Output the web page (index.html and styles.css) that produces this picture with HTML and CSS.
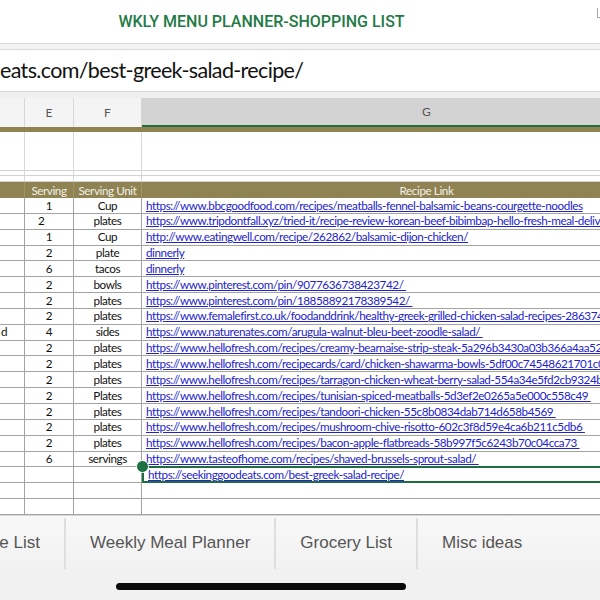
FILE: index.html
```html
<!DOCTYPE html>
<html>
<head>
<meta charset="utf-8">
<link rel="stylesheet" href="styles.css">
</head>
<body>
<header class="top">
  <span></span>
  <h1 class="title">WKLY MENU PLANNER-SHOPPING LIST</h1>
  <span class="corner"></span>
</header>
<div class="strip"></div>
<div class="formula">eats.com/best-greek-salad-recipe/</div>
<div class="gap"></div>
<div class="sheet">
  <div class="ch"></div><div class="ch">E</div><div class="ch">F</div><div class="ch sel">G</div>
  <div class="band"></div>
  <div class="e"></div><div class="e"></div><div class="e"></div><div class="e"></div>
  <div class="e"></div><div class="e"></div><div class="e"></div><div class="e"></div>
  <div class="e"></div><div class="e"></div><div class="e"></div><div class="e"></div>
  <div class="h"></div><div class="h">Serving</div><div class="h">Serving Unit</div><div class="h">Recipe Link</div>

  <div class="c"></div><div class="c n">1</div><div class="c u">Cup</div><div class="c l"><a>https://www.bbcgoodfood.com/recipes/meatballs-fennel-balsamic-beans-courgette-noodles</a></div>
  <div class="c"></div><div class="c n off">2</div><div class="c u">plates</div><div class="c l"><a>https://www.tripdontfall.xyz/tried-it/recipe-review-korean-beef-bibimbap-hello-fresh-meal-delivery-kit/</a></div>
  <div class="c"></div><div class="c n">1</div><div class="c u">Cup</div><div class="c l"><a>http://www.eatingwell.com/recipe/262862/balsamic-dijon-chicken/</a></div>
  <div class="c"></div><div class="c n">2</div><div class="c u">plate</div><div class="c l"><a>dinnerly</a></div>
  <div class="c"></div><div class="c n">6</div><div class="c u">tacos</div><div class="c l"><a>dinnerly</a></div>
  <div class="c"></div><div class="c n">2</div><div class="c u">bowls</div><div class="c l"><a>https://www.pinterest.com/pin/9077636738423742/&nbsp;</a></div>
  <div class="c"></div><div class="c n">2</div><div class="c u">plates</div><div class="c l"><a>https://www.pinterest.com/pin/18858892178389542/&nbsp;</a></div>
  <div class="c"></div><div class="c n">2</div><div class="c u">plates</div><div class="c l"><a>https://www.femalefirst.co.uk/foodanddrink/healthy-greek-grilled-chicken-salad-recipes-2863745.html</a></div>
  <div class="c lt">d</div><div class="c n">4</div><div class="c u">sides</div><div class="c l"><a>https://www.naturenates.com/arugula-walnut-bleu-beet-zoodle-salad/&nbsp;</a></div>
  <div class="c"></div><div class="c n">2</div><div class="c u">plates</div><div class="c l"><a>https://www.hellofresh.com/recipes/creamy-bearnaise-strip-steak-5a296b3430a03b366a4aa522</a></div>
  <div class="c"></div><div class="c n">2</div><div class="c u">plates</div><div class="c l"><a>https://www.hellofresh.com/recipecards/card/chicken-shawarma-bowls-5df00c74548621701c0b9a4c</a></div>
  <div class="c"></div><div class="c n">2</div><div class="c u">plates</div><div class="c l"><a>https://www.hellofresh.com/recipes/tarragon-chicken-wheat-berry-salad-554a34e5fd2cb9324b8b4567</a></div>
  <div class="c"></div><div class="c n">2</div><div class="c u">Plates</div><div class="c l"><a>https://www.hellofresh.com/recipes/tunisian-spiced-meatballs-5d3ef2e0265a5e000c558c49&nbsp;</a></div>
  <div class="c"></div><div class="c n">2</div><div class="c u">plates</div><div class="c l"><a>https://www.hellofresh.com/recipes/tandoori-chicken-55c8b0834dab714d658b4569&nbsp;</a></div>
  <div class="c"></div><div class="c n">2</div><div class="c u">plates</div><div class="c l"><a>https://www.hellofresh.com/recipes/mushroom-chive-risotto-602c3f8d59e4ca6b211c5db6&nbsp;</a></div>
  <div class="c"></div><div class="c n">2</div><div class="c u">plates</div><div class="c l"><a>https://www.hellofresh.com/recipes/bacon-apple-flatbreads-58b997f5c6243b70c04cca73&nbsp;</a></div>
  <div class="c"></div><div class="c n">6</div><div class="c u">servings</div><div class="c l above"><a>https://www.tasteofhome.com/recipes/shaved-brussels-sprout-salad/&nbsp;</a></div>
  <div class="c"></div><div class="c"></div><div class="c"></div><div class="c l picked"><span class="handle"></span><a>https://seekinggoodeats.com/best-greek-salad-recipe/</a></div>
  <div class="c"></div><div class="c"></div><div class="c"></div><div class="c"></div>
  <div class="c"></div><div class="c"></div><div class="c"></div><div class="c"></div>
</div>
<nav class="tabs">
  <div class="tab first"><span>Recipe List</span></div>
  <div class="tab">Weekly Meal Planner</div>
  <div class="tab">Grocery List</div>
  <div class="tab">Misc ideas</div>
</nav>
<div class="home"><div class="bar"></div></div>
</body>
</html>
```
FILE: styles.css
```css
* { box-sizing: border-box; }
html, body { margin: 0; padding: 0; }
body {
  width: 600px;
  height: 600px;
  overflow: hidden;
  background: #ffffff;
  font-family: "Lato", "Liberation Sans", sans-serif;
}
.top {
  height: 43px;
  display: grid;
  grid-template-columns: 1fr auto 1fr;
  align-items: center;
  padding-right: 77px;
}
.title {
  margin: 0;
  font-family: "Roboto", "Liberation Sans", sans-serif;
  font-weight: 500;
  font-size: 16px;
  color: #237a45;
}
.corner {
  justify-self: end;
  align-self: start;
  margin-top: 8px;
  margin-right: -77px;
  width: 3px;
  height: 10px;
  border-left: 1px solid #a8a8a8;
  border-bottom: 1px solid #a8a8a8;
}
.strip {
  height: 7px;
  background: #f3f3f3;
  border-top: 1px solid #dadada;
  border-bottom: 1px solid #dadada;
}
.formula {
  height: 42px;
  background: #fff;
  border-bottom: 1px solid #d8d8d8;
  font-family: "Lato", "Liberation Sans", sans-serif;
  font-size: 21.5px;
  letter-spacing: -0.65px;
  color: #111;
  line-height: 40px;
  white-space: nowrap;
  overflow: hidden;
}
.gap {
  height: 6px;
  background: #efefef;
}
.sheet {
  width: 600px;
  overflow: hidden;
  display: grid;
  grid-template-columns: 25px 49px 68px 570px;
  grid-template-rows: 29px 5px 39px 5px 6px 16px repeat(20, 15.85px);
  font-size: 11.7px;
  letter-spacing: -0.42px;
}
.ch {
  background: #f4f4f4;
  border-right: 1px solid #d6d6d6;
  color: #555;
  font-size: 12px;
  letter-spacing: 0;
  display: flex;
  align-items: center;
  justify-content: center;
}
.ch.sel {
  background: #d3d3d3;
  border-bottom: 2px solid #1e6e3e;
}
.band {
  grid-column: 1 / -1;
  background: #8f8354;
}
.e {
  border-right: 1px solid #d8d8d8;
  border-bottom: 1px solid #d2d2d2;
}
.h {
  background: #8f8354;
  color: #f2efe4;
  display: flex;
  align-items: center;
  justify-content: center;
  white-space: nowrap;
  border-right: 1px solid #9f9466;
}
.c {
  border-right: 1.5px solid #a3a3a3;
  border-bottom: 1.5px solid #a3a3a3;
  display: flex;
  align-items: center;
  white-space: nowrap;
  overflow: hidden;
  color: #111;
  line-height: 1;
}
.n, .u { justify-content: center; }
.n.off { justify-content: flex-start; padding-left: 13px; }
.lt { padding-left: 1px; }
.l { padding-left: 4px; position: relative; overflow: visible; }
.l a {
  color: #2323cc;
  text-decoration: underline;
  text-underline-offset: 1px;
}
.picked {
  border-top: 2px solid #1e6e3e;
  border-bottom: 2px solid #1e6e3e;
  border-left: 2px solid #1e6e3e;
  margin-top: -1.5px;
}
.handle {
  position: absolute;
  left: -8px;
  top: -8px;
  width: 13px;
  height: 13px;
  border-radius: 50%;
  background: #1e7045;
  border: 1px solid #ffffff;
  z-index: 2;
}
.tabs {
  height: 56px;
  display: flex;
  background: linear-gradient(#f8f8f8, #f1f1f1);
  border-top: 1px solid #d4d4d4;
  font-family: "Liberation Sans", Arial, sans-serif;
  font-size: 17px;
  color: #555;
  overflow: hidden;
}
.tab {
  flex: none;
  display: flex;
  align-items: center;
  padding: 0 24px;
  white-space: nowrap;
  border-right: 2px solid #dedede;
  margin: 2px 0;
}
.tab.first {
  width: 66px;
  padding: 0 24px 0 0;
  justify-content: flex-end;
  overflow: hidden;
}
.tab:last-child { border-right: none; }
.home {
  height: 30px;
  background: #f1f1f1;
  padding-top: 12px;
}
.bar {
  margin-left: 116px;
  width: 290px;
  height: 7px;
  border-radius: 4px;
  background: #0a0a0a;
}
```
